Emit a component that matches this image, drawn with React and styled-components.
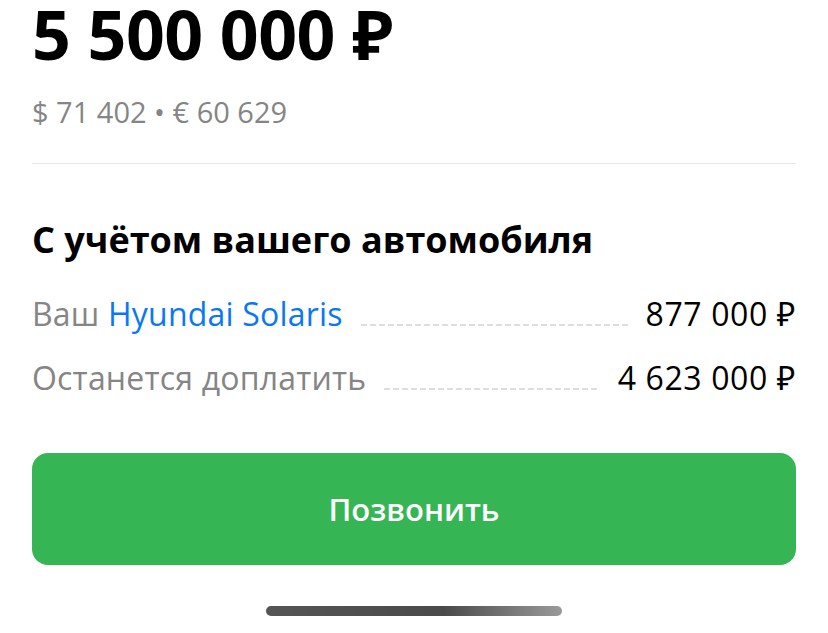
import React from 'react';
import styled, { createGlobalStyle } from 'styled-components';

const Global = createGlobalStyle`
  body {
    margin: 0;
    background: #fff;
    font-family: "Open Sans", "Noto Sans", sans-serif;
    color: #000;
  }
`;

const Page = styled.div`
  width: 828px;
  height: 633px;
  overflow: hidden;
  display: flex;
  flex-direction: column;
  padding: 0 32px;
  box-sizing: border-box;
`;

const Price = styled.div`
  font-size: 68px;
  line-height: 68px;
  font-weight: 700;
  letter-spacing: -0.5px;
`;

const Currencies = styled.div`
  font-size: 29px;
  line-height: 40px;
  color: #858585;
  margin-top: 24px;
`;

const Divider = styled.div`
  height: 1px;
  background: #e6e6e6;
  margin-top: 31px;
`;

const Heading = styled.h2`
  margin: 54px 0 0;
  font-size: 36px;
  line-height: 44px;
  font-weight: 700;
`;

const Rows = styled.div`
  display: flex;
  flex-direction: column;
  gap: 20px;
  margin-top: 30px;
`;

const Row = styled.div`
  display: flex;
  align-items: baseline;
  font-size: 32px;
  line-height: 44px;
`;

const Label = styled.span`
  color: #858585;
  letter-spacing: 0.2px;
`;

const Link = styled.span`
  color: #0a78f5;
`;

const Dots = styled.span`
  flex: 1;
  height: 2px;
  margin: 0 18px;
  background-image: repeating-linear-gradient(
    to right,
    #dedede 0 6px,
    transparent 6px 9px
  );
`;

const Value = styled.span`
  color: #000;
  letter-spacing: 0.6px;
`;

const CallButton = styled.button`
  margin-top: 53px;
  height: 112px;
  border: 0;
  border-radius: 16px;
  background: #36b555;
  color: #fff;
  font-family: inherit;
  font-size: 31px;
  font-weight: 600;
  cursor: pointer;
`;

const HomeBar = styled.div`
  align-self: center;
  width: 296px;
  height: 10px;
  border-radius: 5px;
  margin-top: 41px;
  background: linear-gradient(to right, #555 0%, #4a4a4a 60%, #9a9a9a 100%);
`;

export default function App() {
  return (
    <>
      <Global />
      <Page>
        <Price>5 500 000 ₽</Price>
        <Currencies>$ 71 402 • € 60 629</Currencies>
        <Divider />
        <Heading>С учётом вашего автомобиля</Heading>
        <Rows>
          <Row>
            <Label>
              Ваш <Link>Hyundai Solaris</Link>
            </Label>
            <Dots />
            <Value>877 000 ₽</Value>
          </Row>
          <Row>
            <Label>Останется доплатить</Label>
            <Dots />
            <Value>4 623 000 ₽</Value>
          </Row>
        </Rows>
        <CallButton>Позвонить</CallButton>
        <HomeBar />
      </Page>
    </>
  );
}
